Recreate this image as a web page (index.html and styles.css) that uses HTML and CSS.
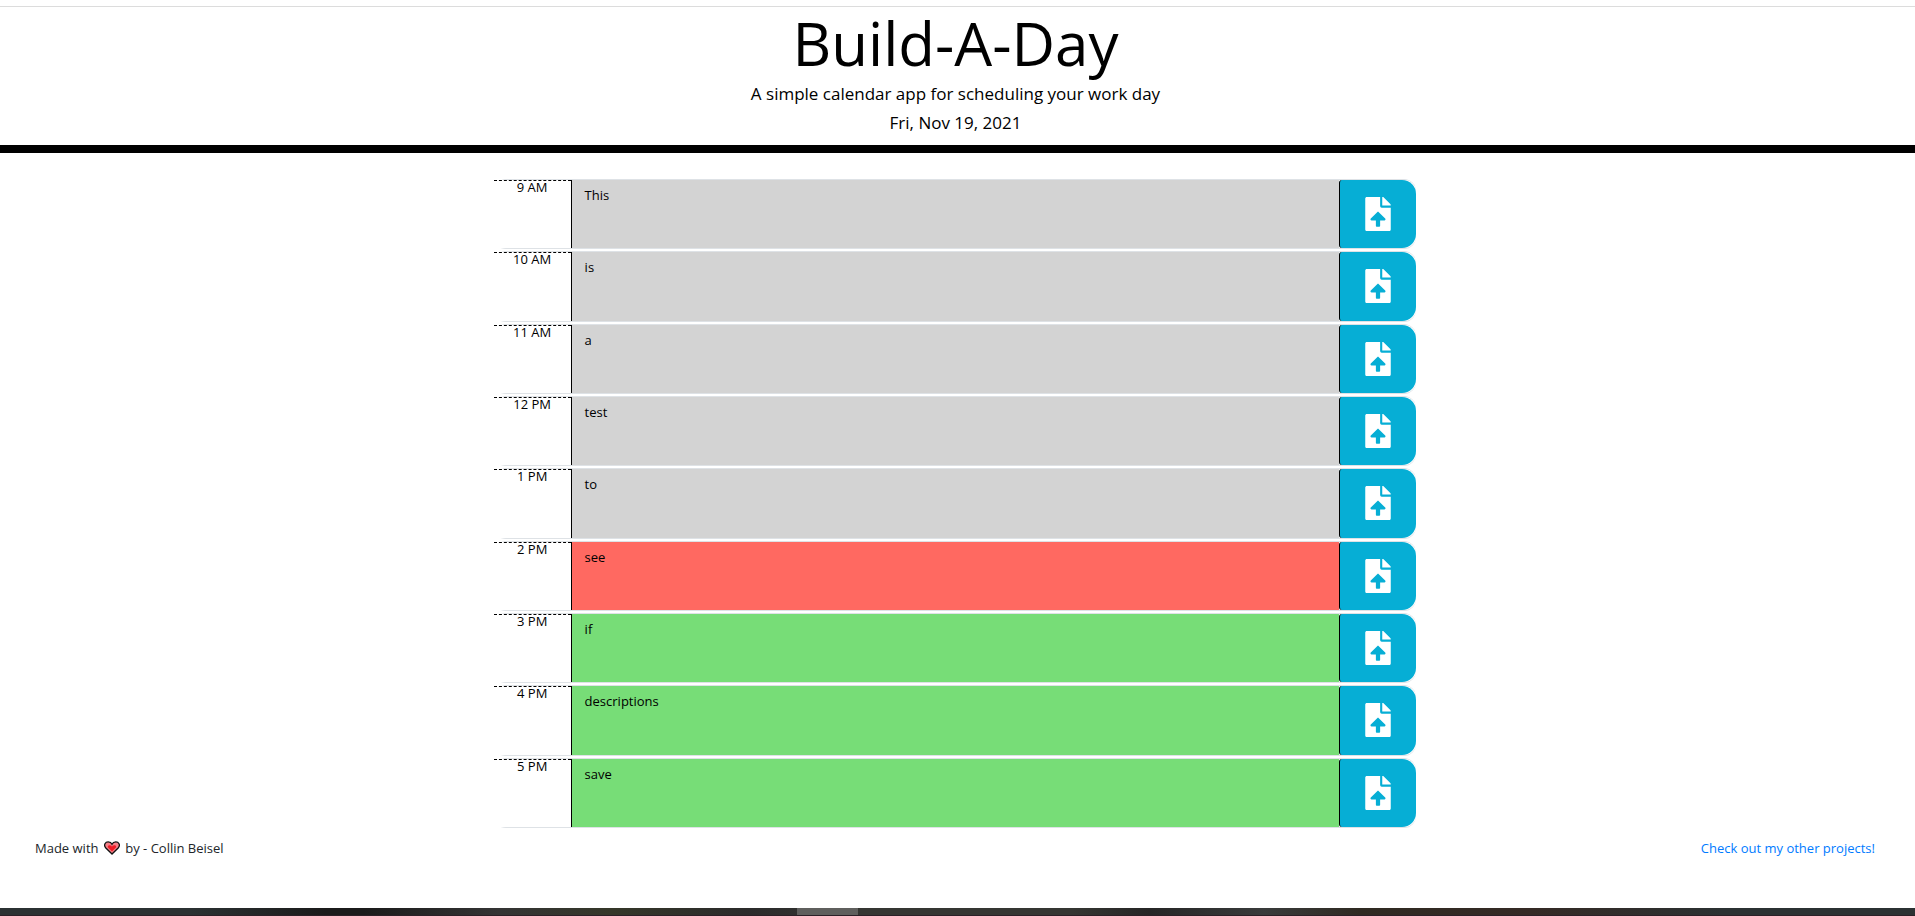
FILE: index.html
```html
<!DOCTYPE html>
<html lang="en">
<head>
<meta charset="utf-8">
<title>Build-A-Day</title>
<link rel="stylesheet" href="styles.css">
</head>
<body>
<header class="masthead">
  <h1 class="title">Build-A-Day</h1>
  <p class="lead">A simple calendar app for scheduling your work day</p>
  <p class="lead">Fri, Nov 19, 2021</p>
</header>
<main class="content">
  <div class="planner" id="planner"></div>
</main>
<footer class="footer">
  <p class="credit">Made with
    <svg class="heart" viewBox="0 0 16 14" role="img" aria-label="love"><path d="M8 13 1.6 6.700C-.6 3.800 1.300.9 4.200.9 6 .9 7.400 1.900 8 3.200 8.600 1.900 10 .9 11.800.9c2.900 0 4.800 2.900 2.600 5.800Z" fill="#f58088" stroke="#111" stroke-width="1.300"/><path d="M8 10.500 4 6.500C3 4.500 5.500 3 8 5.500 10.500 3 13 4.500 12 6.500Z" fill="#ee1c25"/></svg>
    by - Collin Beisel</p>
  <a class="link" href="#projects">Check out my other projects!</a>
</footer>
<div class="taskbar"><span class="taskbar-active"></span></div>
<script src="script.js"></script>
</body>
</html>
```

FILE: styles.css
```css
* {
  box-sizing: border-box;
}

body {
  display: flex;
  flex-direction: column;
  min-height: 100vh;
  margin: 0;
  padding-top: 6px;
  background: #fff;
  color: #000;
  font-family: "Open Sans", "Noto Sans", sans-serif;
  font-size: 13px;
  line-height: 20px;
}

.masthead {
  padding: 0 4px 8px 0;
  border-top: 1px solid #dcdcdc;
  border-bottom: 8px solid #000;
  text-align: center;
}

.title {
  margin: 0;
  font-size: 60px;
  font-weight: 400;
  line-height: 72px;
}

.lead {
  margin: 0;
  font-size: 17px;
  line-height: 29px;
}

.content {
  display: flex;
  flex: 1;
  justify-content: center;
  padding: 26px 5px 0 0;
}

.planner {
  display: flex;
  flex-direction: column;
  gap: 2px;
  width: 48.3%;
}

.row {
  display: grid;
  flex: 1;
  grid-template-columns: 1fr 10fr 1fr;
  min-height: 56px;
  border: 1px solid #dee2e6;
  border-width: 1px 0;
  border-radius: 12px;
}

.hour {
  border-top: 1px dashed #000;
  background: #fff;
  line-height: 13px;
  text-align: center;
}

.note {
  width: 100%;
  height: 100%;
  padding: 5px 13px;
  border: 0;
  border-left: 1px solid #000;
  border-radius: 0;
  outline: 0;
  color: #000;
  font: inherit;
  resize: none;
}

.past {
  background: #d3d3d3;
}

.present {
  background: #ff6961;
}

.future {
  background: #77dd77;
}

.save {
  display: flex;
  align-items: center;
  justify-content: center;
  padding: 0;
  border: 0;
  border-left: 1px solid #000;
  border-radius: 3px 14px 14px 3px;
  background: #06aed5;
  cursor: pointer;
}

.save-icon {
  width: 26px;
  height: 34px;
  fill: #fff;
}

.footer {
  display: flex;
  justify-content: space-between;
  padding: 10px 40px 50px 35px;
}

.credit {
  margin: 0;
  color: #212529;
}

.heart {
  width: 16px;
  height: 14px;
  margin: 0 2px;
  vertical-align: -2px;
}

.link {
  color: #007bff;
  text-decoration: none;
}

.taskbar {
  display: flex;
  justify-content: center;
  height: 8px;
  padding-right: 260px;
  border-bottom: 1px solid #2b2027;
  background: linear-gradient(90deg, #2b3132 0%, #2b3132 10%, #1b1b1b 17%, #1b1b1b 19%, #343434 26%, #353729 32%, #2b2b2b 39%, #353632 45%, #353632 56%, #262626 60%, #393b3b 66%, #2f2a22 71%, #352a25 80%, #2b3132 90%, #2b3132 100%);
}

.taskbar-active {
  width: 61px;
  background: #5f5f5d;
}
```

FILE: script.js
```js
const entries = [
  ["9 AM", "This", "past"],
  ["10 AM", "is", "past"],
  ["11 AM", "a", "past"],
  ["12 PM", "test", "past"],
  ["1 PM", "to", "past"],
  ["2 PM", "see", "present"],
  ["3 PM", "if", "future"],
  ["4 PM", "descriptions", "future"],
  ["5 PM", "save", "future"],
];

document.getElementById("planner").innerHTML = entries
  .map(([hour, text, state], i) => `
    <div class="row">
      <label class="hour" for="note-${i}">${hour}</label>
      <textarea class="note ${state}" id="note-${i}" spellcheck="false">${text}</textarea>
      <button class="save" type="button" aria-label="Save ${hour}">
        <svg class="save-icon" viewBox="0 0 384 512" aria-hidden="true"><path d="M224 136V0H24C10.700 0 0 10.700 0 24v464c0 13.300 10.700 24 24 24h336c13.300 0 24-10.700 24-24V160H248c-13.200 0-24-10.800-24-24zm65.200 216H224v80c0 8.800-7.200 16-16 16h-32c-8.800 0-16-7.200-16-16v-80H94.800c-14.300 0-21.400-17.300-11.300-27.400l96.400-95.700c6.700-6.600 17.400-6.600 24 0l96.400 95.700c10.200 10.100 3.100 27.400-11.100 27.400zM377 105L279.100 7c-4.500-4.500-10.600-7-17-7H256v128h128v-6.100c0-6.300-2.500-12.400-7-16.900z"/></svg>
      </button>
    </div>`)
  .join("");
```
